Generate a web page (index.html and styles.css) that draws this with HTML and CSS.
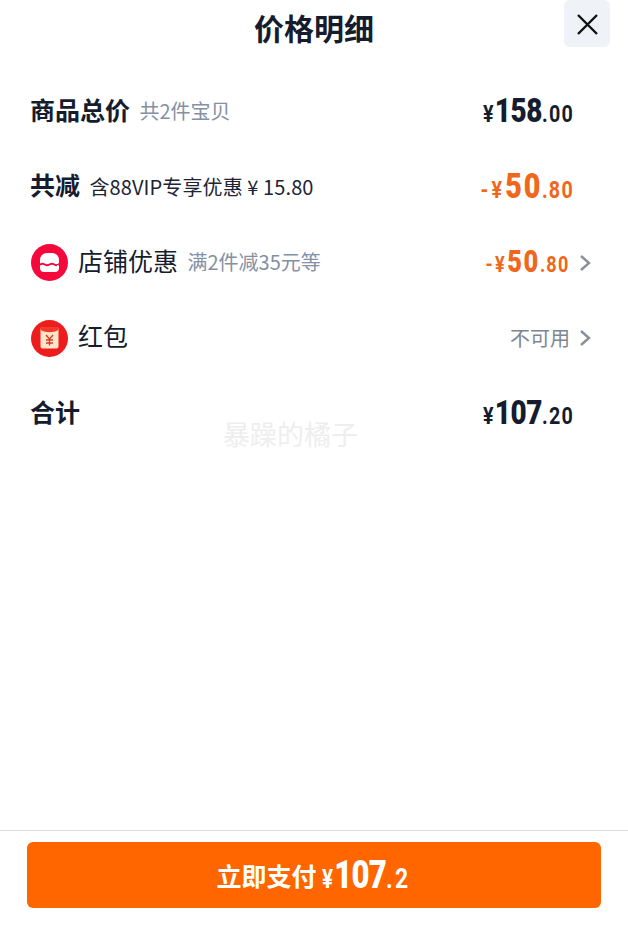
FILE: index.html
```html
<!DOCTYPE html>
<html lang="zh-CN">
<head>
    <meta charset="UTF-8">
    <meta name="viewport" content="width=device-width, initial-scale=1.0">
    <title>价格明细</title>
    <link rel="stylesheet" href="styles.css">
</head>
<body>
    <div class="header">
        <div class="title">价格明细</div>
        <button class="close-button">
            <svg width="24" height="24" viewBox="0 0 24 24"><path d="M3 3 L22 22 M22 3 L3 22" stroke="#111" stroke-width="2.4" fill="none"/></svg>
        </button>
    </div>

    <div class="rows">
        <div class="row">
            <span class="label bold">商品总价</span>
            <span class="sub">共2件宝贝</span>
            <span class="price"><i>¥</i><b>158</b><i>.00</i></span>
        </div>
        <div class="row">
            <span class="label bold">共减</span>
            <span class="sub dark">含88VIP专享优惠 ¥ 15.80</span>
            <span class="price orange"><i>-¥</i><b>50</b><i>.80</i></span>
        </div>
        <div class="row has-arrow">
            <svg class="row-icon" viewBox="0 0 37 37">
                <circle cx="18.5" cy="18.5" r="18.5" fill="#f5083c"/>
                <path d="M9 16 C9 11.5 12.5 9 16 9 L21 9 C24.5 9 28 11.5 28 16 L28 19 C26 20.5 25 20.5 23.3 19.5 C21.5 18.5 20.5 18.5 18.5 19.5 C16.5 20.5 15.5 20.5 13.7 19.5 C12 18.5 11 18.5 9 19.5 Z" fill="#fff"/>
                <path d="M9 21.5 C11 20.5 12 20.5 13.7 21.5 C15.5 22.5 16.5 22.5 18.5 21.5 C20.5 20.5 21.5 20.5 23.3 21.5 C25 22.5 26 22.5 28 21 L28 24 C28 26.5 26.5 28 24 28 L13 28 C10.5 28 9 26.5 9 24 Z" fill="#fff"/>
            </svg>
            <span class="label">店铺优惠</span>
            <span class="sub">满2件减35元等</span>
            <span class="price orange small"><i>-¥</i><b>50</b><i>.80</i></span>
            <svg class="arrow" viewBox="0 0 12 18"><path d="M2 2 L10 9 L2 16" stroke="#8b8f98" stroke-width="2.4" fill="none"/></svg>
        </div>
        <div class="row has-arrow">
            <svg class="row-icon" viewBox="0 0 37 37">
                <circle cx="18.5" cy="18.5" r="18.5" fill="#ee1d1d"/>
                <rect x="9.5" y="7" width="18" height="21.5" rx="2" fill="#fde6c8"/>
                <path d="M9.5 9 C9.5 7.5 10.5 7 11.5 7 L25.5 7 C26.5 7 27.5 7.5 27.5 9 L27.5 10 C22 13 15 13 9.5 10 Z" fill="#f23a2a"/>
                <path d="M15 15 L18.5 19 L22 15 M18.5 19 L18.5 25.5 M15 20 L22 20 M15 23 L22 23" stroke="#d8382a" stroke-width="1.3" fill="none"/>
            </svg>
            <span class="label">红包</span>
            <span class="muted">不可用</span>
            <svg class="arrow" viewBox="0 0 12 18"><path d="M2 2 L10 9 L2 16" stroke="#8b8f98" stroke-width="2.4" fill="none"/></svg>
        </div>
        <div class="row">
            <span class="label bold">合计</span>
            <span class="price"><i>¥</i><b>107</b><i>.20</i></span>
        </div>
        <div class="watermark">暴躁的橘子</div>
    </div>

    <div class="footer">
        <button class="pay-button">立即支付 <span class="pay-amount"><i>¥</i><b>107</b><i>.2</i></span></button>
    </div>
</body>
</html>
```

FILE: styles.css
```css
body {
    margin: 0;
    height: 100vh;
    display: flex;
    flex-direction: column;
    background-color: white;
    color: #141c2e;
    font-family: "Noto Sans CJK SC", "Liberation Sans", sans-serif;
}

.header {
    position: relative;
    height: 58px;
    display: flex;
    justify-content: center;
    align-items: center;
}

.title {
    font-size: 30px;
    font-weight: bold;
    line-height: 58px;
    margin-bottom: 4px;
}

.close-button {
    position: absolute;
    top: 0;
    right: 18px;
    width: 46px;
    height: 47px;
    padding: 0;
    border: none;
    border-radius: 6px;
    background-color: #eff2f6;
    display: flex;
    justify-content: center;
    align-items: center;
}

.rows {
    position: relative;
    flex: 1;
    padding-top: 16px;
}

.row {
    height: 75.5px;
    padding: 0 54px 0 30px;
    box-sizing: border-box;
    display: flex;
    align-items: center;
}

.row.has-arrow {
    padding-right: 37px;
}

.row-icon {
    width: 37px;
    height: 37px;
    margin-left: 1px;
    margin-right: 10px;
}

.label {
    font-size: 25px;
    line-height: 32px;
    margin-bottom: 6px;
}

.label.bold {
    font-weight: bold;
}

.sub {
    font-size: 20px;
    color: #8490a3;
    margin-left: 9.5px;
    margin-bottom: 2px;
}

.sub.dark {
    color: #1c2435;
    letter-spacing: 0.1px;
}

.muted {
    margin-left: auto;
    margin-bottom: 2px;
    font-size: 20px;
    color: #7d8694;
}

/* no condensed font installed, squeeze Roboto instead */
.price {
    margin-left: auto;
    margin-bottom: 3px;
    font-family: Roboto, "Liberation Sans", sans-serif;
    font-weight: bold;
    white-space: nowrap;
    transform: scaleX(0.82);
    transform-origin: right center;
}

.price i {
    font-style: normal;
    font-size: 24px;
    letter-spacing: 1.5px;
}

.price b {
    font-size: 34px;
    letter-spacing: -0.5px;
}

.price.orange {
    color: #f0661a;
    margin-bottom: 2px;
}

.price.orange b {
    font-size: 35px;
    letter-spacing: 2px;
}

.price.orange i:first-child {
    letter-spacing: 4px;
}

.price.small b {
    font-size: 31px;
    letter-spacing: 2px;
}

.price.small i {
    font-size: 22px;
}

.price.small i:first-child {
    letter-spacing: 3px;
}

.arrow {
    width: 12px;
    height: 18px;
    margin-left: 9px;
}

.watermark {
    position: absolute;
    top: 0;
    left: 223px;
    margin-top: 356px;
    font-size: 27px;
    color: #eeeeee;
}

.footer {
    height: 104px;
    box-sizing: border-box;
    border-top: 1px solid #dedede;
    padding: 11px 27px 0;
}

.pay-button {
    width: 100%;
    height: 66px;
    padding: 0;
    border: none;
    border-radius: 6px;
    background-color: #ff6600;
    color: white;
    font-family: "Noto Sans CJK SC", "Liberation Sans", sans-serif;
    font-size: 25px;
    font-weight: bold;
}

.pay-amount {
    display: inline-block;
    vertical-align: -2px;
    margin-right: -19px;
    font-family: Roboto, "Liberation Sans", sans-serif;
    transform: scaleX(0.82);
    transform-origin: left center;
}

.pay-amount i {
    font-style: normal;
    font-size: 25px;
    letter-spacing: 1.5px;
}

.pay-amount i:last-child {
    font-size: 28px;
    letter-spacing: 3px;
}

.pay-amount b {
    font-size: 38px;
    letter-spacing: -1px;
}
```
